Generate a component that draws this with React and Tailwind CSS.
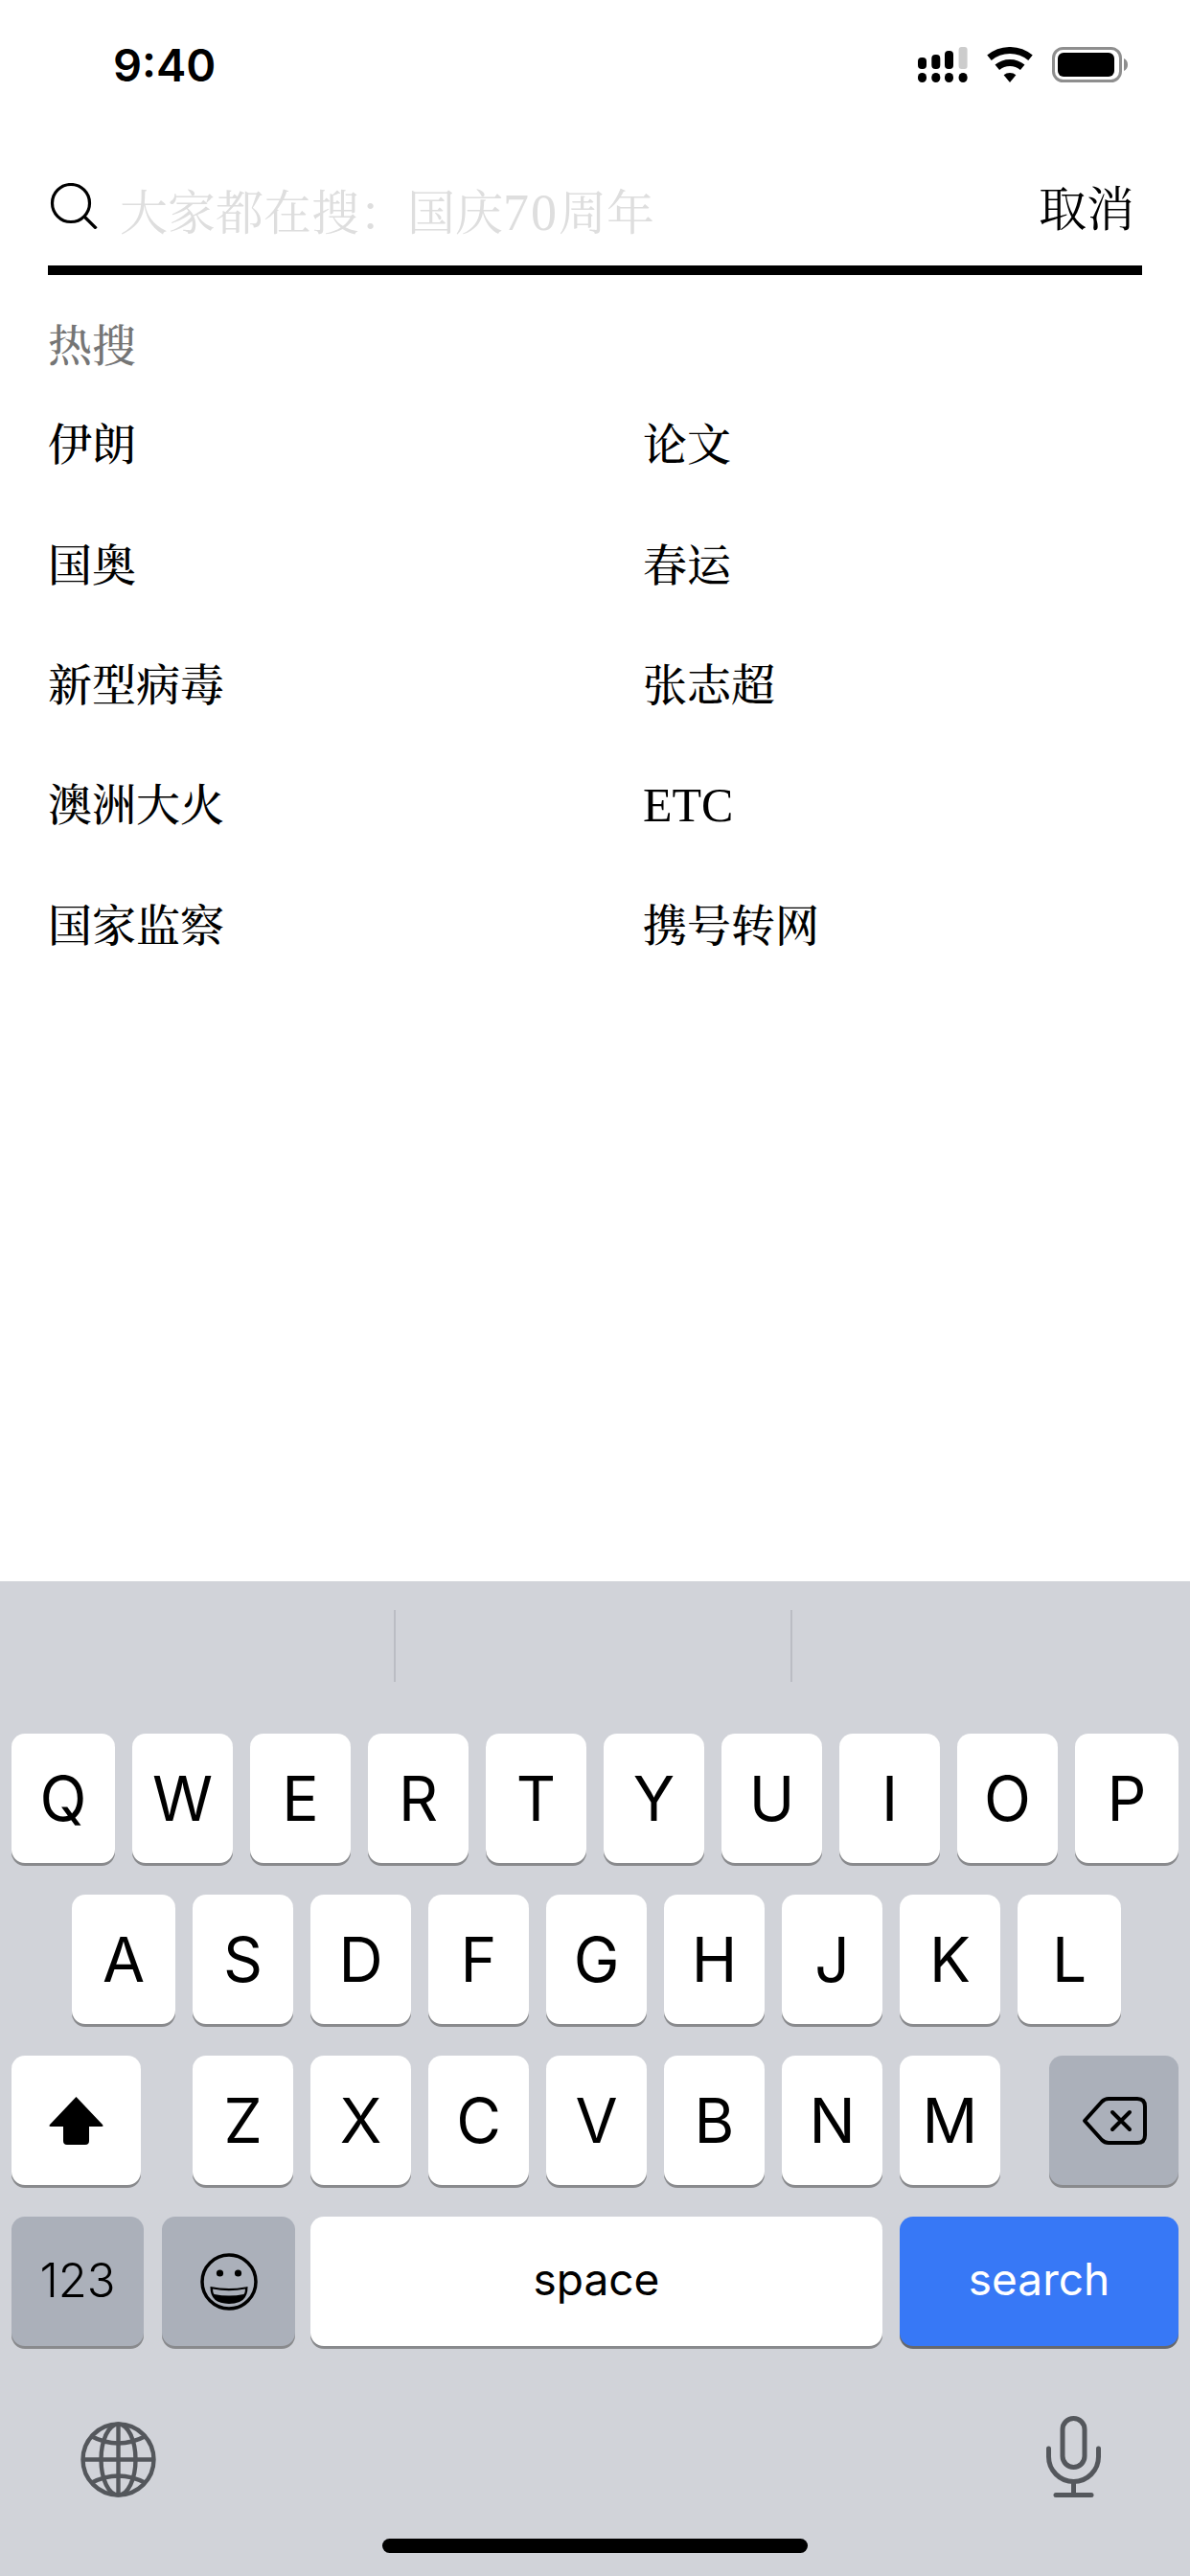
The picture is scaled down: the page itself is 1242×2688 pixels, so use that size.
const serif = "font-['Liberation_Serif','Noto_Serif_CJK_SC','Noto_Sans_CJK_SC',serif]"

const hotWords = [
  ['伊朗', '论文'],
  ['国奥', '春运'],
  ['新型病毒', '张志超'],
  ['澳洲大火', 'ETC'],
  ['国家监察', '携号转网'],
]

const rowOne = ['W', 'E', 'R', 'T', 'Y', 'U', 'I', 'O']
const rowTwo = ['S', 'D', 'F', 'G', 'H', 'J', 'K']
const rowThree = ['Z', 'X', 'C', 'V', 'B', 'N', 'M']

const Signal = () => (
  <svg width="52" height="37" viewBox="0 0 52 37">
    <rect x="0" y="11" width="9" height="12" rx="4" />
    <rect x="14.3" y="8" width="9" height="15" rx="4" />
    <rect x="28" y="4" width="9" height="19" rx="4" />
    <rect x="42.6" y="0" width="9" height="23" rx="3" fill="#cccccc" />
    <rect x="0" y="27" width="9" height="10" rx="4.5" />
    <rect x="14.3" y="27" width="9" height="10" rx="4.5" />
    <rect x="28" y="27" width="9" height="10" rx="4.5" />
    <rect x="42.6" y="27" width="9" height="10" rx="4.5" />
  </svg>
)

const Wifi = () => (
  <svg width="48" height="37" viewBox="0 0 48 37" fill="none" stroke="#000">
    <path d="M2.5 11.3A33.5 33.5 0 0 1 45.5 11.3" strokeWidth="7" />
    <path d="M10.8 21.3A20.5 20.5 0 0 1 37.2 21.3" strokeWidth="7" />
    <path d="M24 37L17.6 29.3A10 10 0 0 1 30.4 29.3Z" fill="#000" stroke="none" />
  </svg>
)

const Battery = () => (
  <svg width="79" height="37" viewBox="0 0 79 37" fill="none">
    <rect x="1.5" y="1.5" width="70" height="34" rx="10" stroke="#8e8e8e" strokeWidth="3" />
    <rect x="6" y="6" width="59" height="25" rx="6" fill="#000" />
    <path d="M75 12C77.5 13 79 15.5 79 18.5C79 21.5 77.5 24 75 25Z" fill="#8e8e8e" />
  </svg>
)

const SearchIcon = () => (
  <svg width="50" height="48" viewBox="0 0 50 48" fill="none" stroke="#000" strokeWidth="3.2">
    <circle cx="22" cy="21" r="19.5" />
    <path d="M36 35L48.5 47.5" />
  </svg>
)

const ShiftIcon = () => (
  <svg width="57" height="50" viewBox="0 0 57 50">
    <path d="M28.5 0L56 29Q57.5 31 55 31H42V46Q42 50 38 50H19Q15 50 15 46V31H2Q-0.5 31 1 29Z" />
  </svg>
)

const DeleteIcon = () => (
  <svg width="68" height="50" viewBox="0 0 68 50" fill="none" stroke="#000" strokeWidth="4" strokeLinecap="round" strokeLinejoin="round">
    <path d="M3 25L21 5Q24 2 28 2H58Q66 2 66 10V40Q66 48 58 48H28Q24 48 21 45Z" />
    <path d="M32 16L50 34M50 16L32 34" />
  </svg>
)

const EmojiIcon = () => (
  <svg width="60" height="60" viewBox="0 0 60 60" fill="none">
    <ellipse cx="30" cy="30" rx="28" ry="28" stroke="#000" strokeWidth="3.5" />
    <circle cx="20.5" cy="21" r="3.6" fill="#000" />
    <circle cx="39.5" cy="21" r="3.6" fill="#000" />
    <path d="M10.5 35Q30 39 49.5 35Q50 53 30 53Q10 53 10.5 35Z" fill="#000" />
    <path d="M13 37.5Q30 41 47 37.5Q47 41 45.5 43Q30 46 14.5 43Q13 41 13 37.5Z" fill="#abb0ba" />
  </svg>
)

const GlobeIcon = () => (
  <svg width="79" height="79" viewBox="0 0 79 79" fill="none" stroke="#54575c" strokeWidth="4.4">
    <circle cx="39.5" cy="39.5" r="37" />
    <ellipse cx="39.5" cy="39.5" rx="18" ry="37" />
    <path d="M39.5 2.5V76.5M2.5 39.5H76.5" />
    <path d="M11 15Q39.5 30 68 15M11 64Q39.5 49 68 64" />
  </svg>
)

const MicIcon = () => (
  <svg width="57" height="85" viewBox="0 0 57 85" fill="none" stroke="#54575c" strokeWidth="5" strokeLinecap="round">
    <rect x="17" y="2.5" width="23" height="51" rx="11.5" />
    <path d="M2.5 34V42.5A26 26 0 0 0 54.5 42.5V34" />
    <path d="M28.5 69V82" strokeLinecap="butt" />
    <path d="M10 82.5H47" />
  </svg>
)

// no white or text size in the base, each key brings its own
const Key = ({ children, className }) => (
  <div className={`flex h-[135px] items-center justify-center rounded-[14px] font-[Inter] leading-none ${className}`}>
    {children}
  </div>
)

const letterKey = 'bg-white text-[64px] font-normal text-black shadow-[0_3px_0_#898a8d]'
const greyKey = 'bg-[#abb0ba] text-black shadow-[0_3px_0_#898a8d]'

const App = () => {
  return (
    <div className="flex h-[2688px] w-[1242px] flex-col overflow-hidden bg-white">
      <div className="flex h-[178px] items-start pl-[118px] pr-[65px] pt-[49px]">
        <span className="font-[Inter] text-[47px] font-semibold leading-[38px] text-black">9:40</span>
        <div className="ml-auto flex items-start gap-[20px]">
          <Signal />
          <Wifi />
          <Battery />
        </div>
      </div>

      <div className="mx-[50px] flex h-[109px] items-start border-b-[10px] border-black pt-[13px]">
        <div className="pl-[2px]">
          <SearchIcon />
        </div>
        <span className={`ml-[23px] -mt-[5px] ${serif} text-[50px] leading-[72px] text-[#dedede]`}>
          大家都在搜：国庆<span className="text-[54px] tracking-[2px]">70</span>周年
        </span>
        <span className={`ml-auto mr-[8px] -mt-[2px] ${serif} text-[50px] leading-[60px] text-black`}>取消</span>
      </div>

      <div className={`px-[50px] pb-[16px] pt-[52px] ${serif} text-[46px] font-medium leading-[46px] text-[#757575]`}>热搜</div>

      <div className={`grid grid-cols-2 auto-rows-[125.4px] ${serif} text-[46px] font-medium text-black`}>
        {hotWords.flat().map((word) => (
          <div key={word} className="flex items-center pl-[50px] pt-[2px]">
            {word === 'ETC' ? <span className="text-[50px] font-normal">{word}</span> : word}
          </div>
        ))}
      </div>

      <div className="mt-auto flex h-[1038px] flex-col bg-[#d1d3d9]">
        <div className="flex h-[159px] justify-center pr-[4px] pt-[30px]">
          <div className="h-[75px] w-[416px] border-x-[2px] border-[#bbbdc4]" />
        </div>

        <div className="flex flex-col gap-[33px]">
          <div className="flex gap-[18px] pl-[12px]">
            <Key className={`w-[108px] ${letterKey}`}>Q</Key>
            {rowOne.map((letter) => (
              <Key key={letter} className={`w-[105px] ${letterKey}`}>{letter}</Key>
            ))}
            <Key className={`w-[108px] ${letterKey}`}>P</Key>
          </div>

          <div className="flex gap-[18px] pl-[75px]">
            <Key className={`w-[108px] ${letterKey}`}>A</Key>
            {rowTwo.map((letter) => (
              <Key key={letter} className={`w-[105px] ${letterKey}`}>{letter}</Key>
            ))}
            <Key className={`w-[108px] ${letterKey}`}>L</Key>
          </div>

          <div className="flex px-[12px]">
            <Key className={`w-[135px] ${letterKey}`}><ShiftIcon /></Key>
            <div className="ml-[54px] flex gap-[18px]">
              {rowThree.map((letter) => (
                <Key key={letter} className={`w-[105px] ${letterKey}`}>{letter}</Key>
              ))}
            </div>
            <Key className={`ml-auto w-[135px] ${greyKey}`}><DeleteIcon /></Key>
          </div>

          <div className="flex px-[12px]">
            <Key className={`w-[138px] pb-[2px] text-[49px] font-[350] ${greyKey}`}>123</Key>
            <Key className={`ml-[19px] w-[139px] ${greyKey}`}><EmojiIcon /></Key>
            <Key className="ml-[16px] w-[597px] bg-white pb-[6px] text-[46px] text-black shadow-[0_3px_0_#898a8d]">space</Key>
            <Key className="ml-[18px] w-[291px] bg-[#3778f6] pb-[6px] text-[46px] text-white shadow-[0_3px_0_#66686d]">search</Key>
          </div>
        </div>

        <div className="mt-[73px] flex h-[85px] items-end justify-between pl-[84px] pr-[93px]">
          <GlobeIcon />
          <MicIcon />
        </div>

        <div className="mx-auto mt-[43px] h-[15px] w-[444px] rounded-full bg-black" />
      </div>
    </div>
  )
}

export default App
